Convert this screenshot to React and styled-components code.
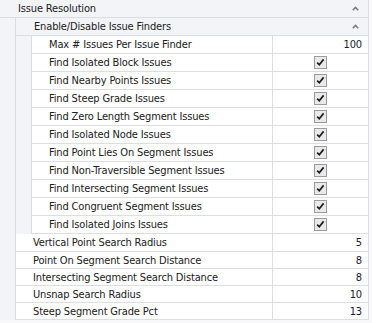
import React from 'react';
import styled, { createGlobalStyle } from 'styled-components';

const Global = createGlobalStyle`
  html, body { margin: 0; padding: 0; background: #f8f8fa; }
  body { font-family: "DejaVu Sans Condensed", "DejaVu Sans", "Liberation Sans", sans-serif; font-size: 11px; letter-spacing: -0.15px; color: #202020; }
`;

const LINE = '#dcdee3';
const GRAY = '#f3f4f7';

const Grid = styled.div`
  width: 368px;
  border-right: 1px solid ${LINE};
  background: ${GRAY};
`;

const CategoryHeader = styled.div`
  display: flex;
  align-items: center;
  height: 17px;
  border-bottom: 1px solid ${LINE};
  background: ${GRAY};
  padding-left: 18px;
  padding-right: 9px;
`;

const Title = styled.span`
  flex: 1;
  white-space: nowrap;
`;

const Chevron = styled.svg`
  width: 7px;
  height: 5px;
  flex: none;
`;

const CategoryBody = styled.div`
  display: flex;
`;

const Gutter = styled.div`
  width: 15px;
  flex: none;
  background: ${GRAY};
  border-right: 1px solid ${LINE};
`;

const Rows = styled.div`
  flex: 1;
  display: flex;
  flex-direction: column;
  min-width: 0;
`;

const Row = styled.div`
  display: grid;
  grid-template-columns: 1fr 96px;
  height: ${p => p.$h - 1}px;
  border-bottom: 1px solid ${LINE};
  background: #ffffff;
`;

const Name = styled.div`
  padding-left: 17px;
  display: flex;
  align-items: center;
  white-space: nowrap;
  overflow: hidden;
`;

const Value = styled.div`
  border-left: 1px solid ${LINE};
  display: flex;
  align-items: center;
  justify-content: ${p => (p.$center ? 'center' : 'flex-end')};
  padding-right: ${p => (p.$center ? '0' : '6px')};
  color: #1a1a2e;
`;

const Check = styled.svg`
  width: 13px;
  height: 13px;
  display: block;
`;

function CheckBox() {
  return (
    <Check viewBox="0 0 13 13">
      <rect x="0.5" y="0.5" width="12" height="12" fill="#e9e9ec" stroke="#9a9a9f" />
      <path d="M3.2 6.6 L5.3 8.8 L9.6 3.4" fill="none" stroke="#1c1c1c" strokeWidth="1.7" />
    </Check>
  );
}

function Caret() {
  return (
    <Chevron viewBox="0 0 7 5">
      <path d="M0.8 4.2 L3.5 1.4 L6.2 4.2" fill="none" stroke="#777a80" strokeWidth="1.6" />
    </Chevron>
  );
}

const finders = [
  'Find Isolated Block Issues',
  'Find Nearby Points Issues',
  'Find Steep Grade Issues',
  'Find Zero Length Segment Issues',
  'Find Isolated Node Issues',
  'Find Point Lies On Segment Issues',
  'Find Non-Traversible Segment Issues',
  'Find Intersecting Segment Issues',
  'Find Congruent Segment Issues',
  'Find Isolated Joins Issues',
];

const settings = [
  ['Vertical Point Search Radius', '5', 18],
  ['Point On Segment Search Distance', '8', 17],
  ['Intersecting Segment Search Distance', '8', 17],
  ['Unsnap Search Radius', '10', 17],
  ['Steep Segment Grade Pct', '13', 17],
];

function PropRow({ name, value, check, h = 18 }) {
  return (
    <Row $h={h}>
      <Name>{name}</Name>
      {check ? (
        <Value $center><CheckBox /></Value>
      ) : (
        <Value>{value}</Value>
      )}
    </Row>
  );
}

function Category({ title, children }) {
  return (
    <>
      <CategoryHeader>
        <Title>{title}</Title>
        <Caret />
      </CategoryHeader>
      <CategoryBody>
        <Gutter />
        <Rows>{children}</Rows>
      </CategoryBody>
    </>
  );
}

export default function App() {
  return (
    <>
      <Global />
      <Grid>
        <Category title="Issue Resolution">
          <Category title="Enable/Disable Issue Finders">
            <PropRow name="Max # Issues Per Issue Finder" value="100" />
            {finders.map(f => (
              <PropRow key={f} name={f} check />
            ))}
          </Category>
          {settings.map(([n, v, h]) => (
            <PropRow key={n} name={n} value={v} h={h} />
          ))}
        </Category>
      </Grid>
    </>
  );
}
